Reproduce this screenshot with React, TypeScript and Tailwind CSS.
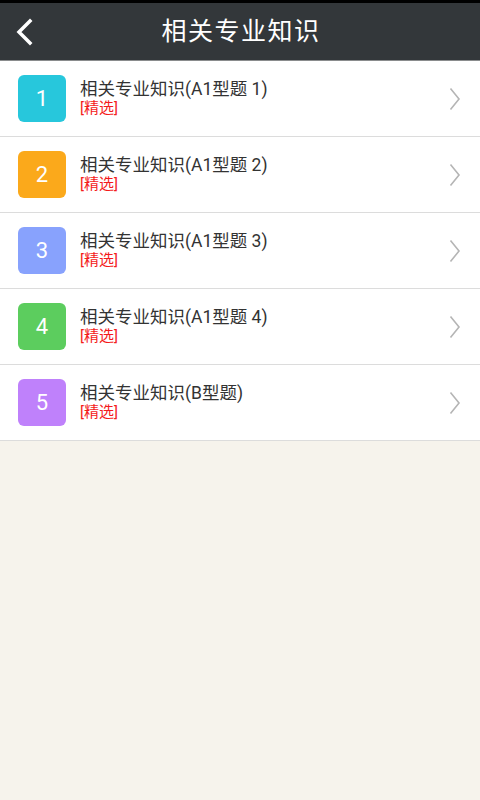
import React from 'react';

const items = [
  { n: 1, title: '相关专业知识(A1型题 1)', color: 'bg-[#27c7dc]' },
  { n: 2, title: '相关专业知识(A1型题 2)', color: 'bg-[#fba91b]' },
  { n: 3, title: '相关专业知识(A1型题 3)', color: 'bg-[#88a2fd]' },
  { n: 4, title: '相关专业知识(A1型题 4)', color: 'bg-[#5ccd5e]' },
  { n: 5, title: '相关专业知识(B型题)', color: 'bg-[#bf81fb]' },
];

const font = { fontFamily: '"Roboto", "Noto Sans CJK SC", sans-serif' };

const App = () => {
  return (
    <div className="w-[480px] h-[800px] bg-[#f6f3ec] flex flex-col" style={font}>
      <div className="h-[3px] bg-black" />
      <div className="h-[58px] bg-[#33373a] flex items-center relative border-b border-[#8a8c8d]">
        <svg className="absolute left-[14px] top-[15px]" width="22" height="28" viewBox="0 0 22 28">
          <path d="M16 3 L5 14 L16 25" fill="none" stroke="#fff" strokeWidth="3.5" strokeLinecap="square" />
        </svg>
        <div className="flex-1 text-center text-white text-[25px] tracking-[1.5px] pl-[2px]">相关专业知识</div>
      </div>
      <div className="bg-white">
        {items.map((it) => (
          <div key={it.n} className="h-[76px] flex items-center border-b border-[#dcdcdc] relative">
            <div className={`${it.color} w-[48px] h-[47px] ml-[18px] rounded-[6px] flex items-center justify-center text-white text-[22px]`}>
              {it.n}
            </div>
            <div className="ml-[14px] flex flex-col leading-none">
              <div className="text-[17.5px] text-[#333333]">{it.title}</div>
              <div className="text-[15px] text-[#f41b1b] mt-[3px]">[精选]</div>
            </div>
            <svg className="absolute right-[19px] top-[26px]" width="12" height="24" viewBox="0 0 12 24">
              <path d="M1.5 1.5 L10 12 L1.5 22.5" fill="none" stroke="#b5b5b5" strokeWidth="1.6" />
            </svg>
          </div>
        ))}
      </div>
    </div>
  );
};

export default App;
